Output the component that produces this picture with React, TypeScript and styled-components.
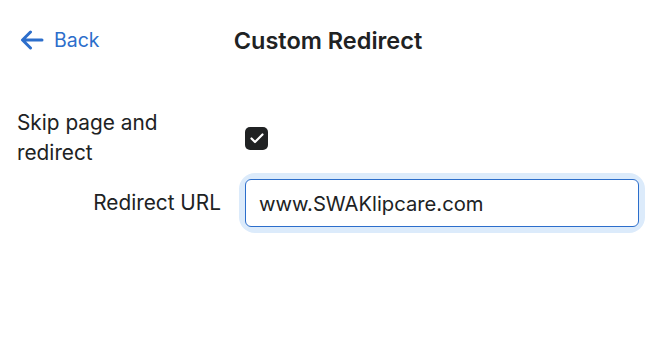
import React, { useState } from "react";
import styled, { createGlobalStyle } from "styled-components";

const GlobalStyle = createGlobalStyle`
  html, body {
    margin: 0;
    padding: 0;
    background: #fff;
  }
  body {
    font-family: Inter, "Noto Sans", sans-serif;
    color: #202223;
    -webkit-font-smoothing: antialiased;
  }
`;

const Page = styled.div`
  width: 658px;
  height: 344px;
  box-sizing: border-box;
  padding: 0 19px 0 17px;
`;

const Header = styled.div`
  display: grid;
  grid-template-columns: 1fr auto 1fr;
  align-items: center;
  height: 80px;
`;

const BackLink = styled.a`
  display: flex;
  align-items: center;
  gap: 10px;
  color: #2c6ecb;
  font-size: 19.5px;
  text-decoration: none;
  cursor: pointer;
  padding-left: 3px;
  justify-self: start;
`;

const Title = styled.h1`
  margin: 0;
  font-size: 23.5px;
  font-weight: 600;
  color: #202223;
`;

const Form = styled.div`
  display: grid;
  grid-template-columns: 204px 1fr;
  column-gap: 24px;
  row-gap: 11px;
  align-items: center;
  margin-top: 28px;
`;

const Label = styled.label<{ $align?: "left" | "right" }>`
  font-size: 20.8px;
  line-height: 30px;
  color: #202223;
  text-align: ${(p) => p.$align || "left"};
`;

const CheckBox = styled.button<{ $checked: boolean }>`
  width: 23px;
  height: 23px;
  border-radius: 5px;
  border: none;
  padding: 0;
  background: ${(p) => (p.$checked ? "#202223" : "#fff")};
  display: flex;
  align-items: center;
  justify-content: center;
  cursor: pointer;
`;

const InputRing = styled.div`
  border-radius: 10px;
  box-shadow: 0 0 0 6px #dcebfb;
`;

const Input = styled.input`
  display: block;
  width: 100%;
  box-sizing: border-box;
  height: 48px;
  border: 1px solid #2c6ecb;
  border-radius: 6px;
  padding: 0 13px;
  font-family: inherit;
  font-size: 20.2px;
  color: #202223;
  outline: none;
  background: #fff;
`;

export default function App() {
  const [checked, setChecked] = useState(true);
  const [url, setUrl] = useState("www.SWAKlipcare.com");
  return (
    <Page>
      <GlobalStyle />
      <Header>
        <BackLink>
          <svg width="24" height="20" viewBox="0 0 24 20" fill="none">
            <path
              d="M22 10H3M10.5 2L2.5 10L10.5 18"
              stroke="#2c6ecb"
              strokeWidth="3"
              strokeLinecap="round"
              strokeLinejoin="round"
            />
          </svg>
          Back
        </BackLink>
        <Title>Custom Redirect</Title>
        <div />
      </Header>
      <Form>
        <Label>
          Skip page and
          <br />
          redirect
        </Label>
        <CheckBox $checked={checked} onClick={() => setChecked(!checked)}>
          {checked && (
            <svg width="14" height="11" viewBox="0 0 14 11" fill="none">
              <path
                d="M1.5 5.5L5 9L12.5 1.5"
                stroke="#fff"
                strokeWidth="2.2"
                strokeLinecap="round"
                strokeLinejoin="round"
              />
            </svg>
          )}
        </CheckBox>
        <Label $align="right">Redirect URL</Label>
        <InputRing>
          <Input value={url} onChange={(e) => setUrl(e.target.value)} />
        </InputRing>
      </Form>
    </Page>
  );
}
